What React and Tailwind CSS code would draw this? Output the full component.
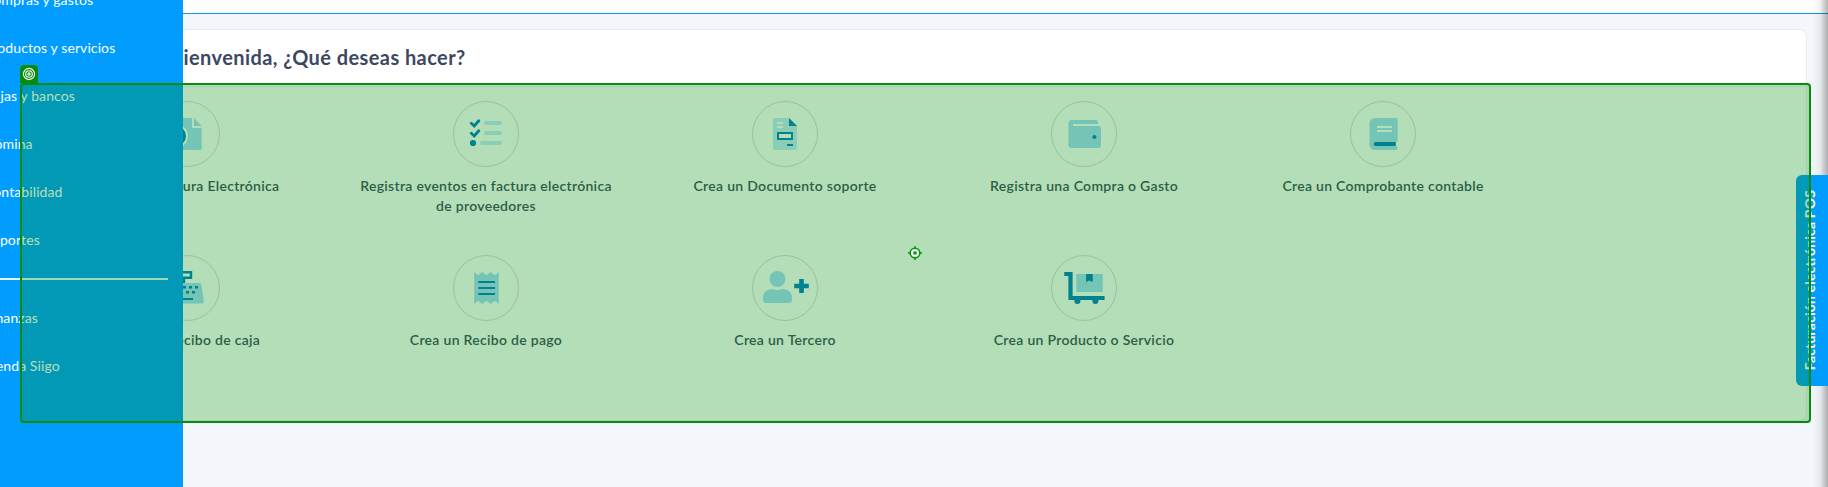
import React from "react";

const DARK = "#007ac6";
const LIGHT = "#a5dbff";
const PALE = "#c4e8ff";

const InvoiceIcon = () => (
  <>
    <path fill={LIGHT} d="M16 19a2 2 0 0 1 2-2h20v10h9.700v20.500a1.500 1.500 0 0 1-1.500 1.500H18a2 2 0 0 1-2-2z" />
    <path fill={LIGHT} d="M40 17l7.700 8H40z" />
    <circle cx="22" cy="35" r="11" fill={DARK} stroke="#fff" strokeWidth="2" />
  </>
);

const ChecklistIcon = () => (
  <>
    <g stroke={PALE} strokeWidth="4" strokeLinecap="round">
      <path d="M33 22h14M33 32h14M29 42h18" />
    </g>
    <path d="M18.300 22.300l2.900 2.700 4.600-5.200M18.300 32.300l2.900 2.700 4.600-5.200" fill="none" stroke={DARK} strokeWidth="2.900" strokeLinecap="round" />
    <circle cx="20" cy="42" r="3.100" fill={DARK} />
  </>
);

const SupportDocIcon = () => (
  <>
    <path fill={PALE} d="M23 17h14l8 8v22a2 2 0 0 1-2 2H23a2 2 0 0 1-2-2V19a2 2 0 0 1 2-2z" />
    <path fill={DARK} d="M37 17l8 8h-8z" />
    <path fill="#fff" d="M25 21h6v2h-6zM25 25h6v2h-6z" />
    <rect x="26" y="32" width="14" height="6" fill="#fff" stroke={DARK} strokeWidth="2" />
    <path fill={DARK} d="M35 43h6v2h-6z" />
  </>
);

const WalletIcon = () => (
  <>
    <path fill={LIGHT} d="M20.500 19H45a2 2 0 0 1 2 2v2H22v2h25a3 3 0 0 1 3 3v16a3 3 0 0 1-3 3H20.500a3 3 0 0 1-3-3V22a3 3 0 0 1 3-3z" />
    <circle cx="43.400" cy="36" r="2.100" fill={DARK} />
  </>
);

const BookIcon = () => (
  <>
    <path fill={LIGHT} d="M25 17h21a1.700 1.700 0 0 1 1.700 1.700V39.500a2 2 0 0 1-1.700 1.500v4a2 2 0 0 1 1.700 2 2 2 0 0 1-1.700 2H25a5.500 5.500 0 0 1-5.500-5.500v-21A5.500 5.500 0 0 1 25 17z" />
    <path fill="#fff" d="M27 25h15v2H27zM27 29h15v2H27z" />
    <path fill={DARK} d="M25.700 41h20v4h-20a2 2 0 0 1 0-4z" />
  </>
);

const RegisterIcon = () => (
  <>
    <path fill="none" stroke={DARK} strokeWidth="2.400" d="M20 17.200h17v5.600H20zM30 23v6" />
    <path fill={LIGHT} d="M19 28h26.500a2 2 0 0 1 1.900 1.700l2.300 16a2 2 0 0 1-2 2.800H17z" />
    <path fill={DARK} d="M29 31h3v2.500h-3zM35 31h3v2.500h-3zM41 31h3v2.500h-3zM32 36h3v2.500h-3zM38 36h3v2.500h-3zM26 43h13v2H26z" />
  </>
);

const ReceiptIcon = () => (
  <>
    <path fill={LIGHT} d="M21.200 17l4 3.200 4.100-3.200 4.200 3.200 4.100-3.200 4.200 3.200 4-3.200v32l-4-3.200-4.200 3.200-4.100-3.200-4.200 3.200-4.100-3.200-4 3.200z" />
    <path stroke={DARK} strokeWidth="2" d="M25.300 27H42M25.300 33H42M25.300 39H42" />
  </>
);

const PersonIcon = () => (
  <>
    <circle cx="25.500" cy="24" r="8" fill={LIGHT} />
    <path fill={LIGHT} d="M20 34c3.500 1.300 7.500 1.300 11 0 5 0 9 4 9 8.500V45a3 3 0 0 1-3 3H14a3 3 0 0 1-3-3v-2.500C11 38 15 34 20 34z" />
    <path stroke={DARK} strokeWidth="4.600" d="M49.500 24v14M42.200 31h14.600" />
  </>
);

const TrolleyIcon = () => (
  <>
    <path fill={LIGHT} d="M25.300 19h26.400v18H25.300z" />
    <path fill={DARK} d="M35 19h6.700v8l-3.350-1.500L35 27z" />
    <path fill={DARK} d="M13.300 17h8.300v24h32v4H17.400V21h-4.100z" />
    <circle cx="26.400" cy="46" r="3" fill={DARK} />
    <circle cx="44.400" cy="46" r="3" fill={DARK} />
  </>
);

const ACTIONS = [
  { label: "Crea una Factura Electrónica", Icon: InvoiceIcon },
  { label: "Registra eventos en factura electrónica de proveedores", Icon: ChecklistIcon },
  { label: "Crea un Documento soporte", Icon: SupportDocIcon },
  { label: "Registra una Compra o Gasto", Icon: WalletIcon },
  { label: "Crea un Comprobante contable", Icon: BookIcon },
  { label: "Crea un Recibo de caja", Icon: RegisterIcon },
  { label: "Crea un Recibo de pago", Icon: ReceiptIcon },
  { label: "Crea un Tercero", Icon: PersonIcon },
  { label: "Crea un Producto o Servicio", Icon: TrolleyIcon },
];

const MENU = ["Compras y gastos", "Productos y servicios", "Cajas y bancos", "Nómina", "Contabilidad", "Reportes"];
const MENU_EXTRA = ["Finanzas", "Tienda Siigo"];

function MenuItem({ children }) {
  return <li className="flex h-12 items-center pb-px whitespace-nowrap">{children}</li>;
}

function Sidebar() {
  return (
    <aside className="h-full w-[183px] shrink-0 overflow-hidden bg-[#009dff] text-sm tracking-[0.1px] text-white">
      <nav className="-mt-6 -ml-4">
        <ul>
          {MENU.map((m) => (
            <MenuItem key={m}>{m}</MenuItem>
          ))}
        </ul>
        <hr className="mt-[14px] mr-[15px] border-t-2 border-[#e6f5ff]" />
        <ul className="mt-[14px]">
          {MENU_EXTRA.map((m) => (
            <MenuItem key={m}>{m}</MenuItem>
          ))}
        </ul>
      </nav>
    </aside>
  );
}

function Action({ label, Icon }) {
  return (
    <div className="flex h-[154px] flex-col items-center">
      <svg className="size-[66px]" viewBox="0 0 66 66">
        <circle cx="33" cy="33" r="32.500" fill="none" stroke="#d6d8d7" />
        <Icon />
      </svg>
      <p className="mt-[9px] w-[260px] text-center text-sm leading-5 font-semibold tracking-[0.3px]">{label}</p>
    </div>
  );
}

export default function App() {
  return (
    <div className="relative flex h-[487px] w-[1828px] overflow-hidden bg-[#f3f6fa] font-['Lato',sans-serif] text-[#3c4860]">
      <Sidebar />
      <main className="min-w-0 flex-1 overflow-hidden">
        <div className="-ml-[183px]">
          <header className="h-[14px] border-b border-[#0d95ea] bg-white" />
          <section className="mt-[15px] mr-[21px] ml-5 h-[392px] rounded-lg border border-[#e8ebee] bg-white">
            <div className="flex h-[57px] items-center border-b border-[#e8ebee] pb-0.5 pl-[149px]">
              <h1 className="text-xl font-bold tracking-[0.42px]">Bienvenida, ¿Qué deseas hacer?</h1>
            </div>
            <div className="ml-[16.500px] grid w-[1495px] grid-cols-5 pt-[14px]">
              {ACTIONS.map((a) => (
                <Action key={a.label} {...a} />
              ))}
            </div>
          </section>
        </div>
      </main>

      <div className="absolute inset-y-0 right-0 w-4 bg-linear-to-r from-black/0 via-black/5 to-black/30" />

      <div className="absolute top-[175px] right-0 flex h-[211px] w-8 items-center justify-center rounded-l-md bg-[#009dff] pr-1">
        <span className="rotate-180 text-sm leading-4 font-bold tracking-[0.17px] whitespace-nowrap text-white [writing-mode:vertical-rl]">
          Facturación electrónica POS
        </span>
      </div>

      <div className="absolute top-[65px] left-5 flex size-[18px] items-center justify-center rounded-t bg-[#088a0c]">
        <svg className="size-[14px]" viewBox="0 0 14 14" fill="none" stroke="#fff" strokeWidth="1.100">
          <circle cx="7" cy="7" r="5.600" />
          <circle cx="7" cy="7" r="3.300" />
          <circle cx="7" cy="7" r="1.100" />
        </svg>
      </div>
      <div className="absolute top-[83px] left-5 flex h-[340px] w-[1791px] items-center justify-center rounded-[4px] border-2 border-[#088a0c] bg-[#08910f]/30 pr-px">
        <svg className="size-[14px]" viewBox="0 0 14 14">
          <circle cx="7" cy="7" r="4.800" fill="#e8f6e8" stroke="#0a930f" strokeWidth="1.500" />
          <path d="M7 0v2.500M7 11.500V14M0 7h2.500M11.500 7H14" stroke="#0a930f" strokeWidth="1.500" />
          <circle cx="7" cy="7" r="1.800" fill="#0a930f" />
        </svg>
      </div>
    </div>
  );
}
